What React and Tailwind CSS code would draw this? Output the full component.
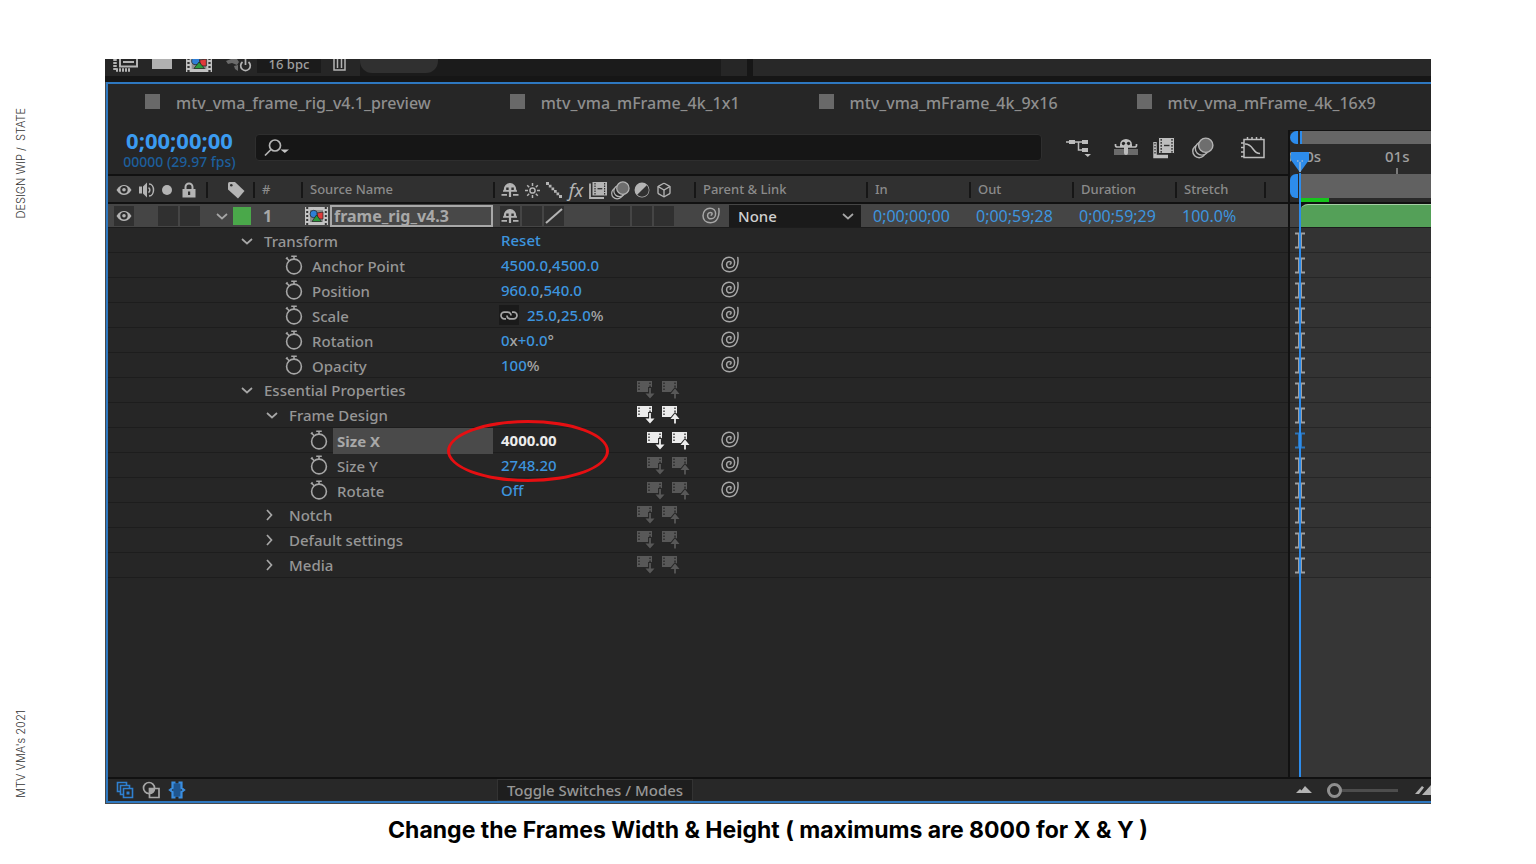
import clsx from 'clsx'
import { Box } from 'lucide-react'

const COLUMNS = 'grid grid-cols-[100px_47px_48px_minmax(0,1fr)_201px_172px_103px_103px_103px_89px_22px]'
const PROP_COLUMNS = 'grid grid-cols-[minmax(0,1fr)_201px_592px]'

const tabs = [
    'mtv_vma_frame_rig_v4.1_preview',
    'mtv_vma_mFrame_4k_1x1',
    'mtv_vma_mFrame_4k_9x16',
    'mtv_vma_mFrame_4k_16x9',
]

// strings in `value` starting with "~" are drawn as plain grey units
const rows = [
    { name: 'Transform', kind: 'group', level: 0, open: true, reset: true },
    { name: 'Anchor Point', kind: 'prop', level: 0, value: ['4500.0', '~,', '4500.0'] },
    { name: 'Position', kind: 'prop', level: 0, value: ['960.0', '~,', '540.0'] },
    { name: 'Scale', kind: 'prop', level: 0, linked: true, value: ['25.0', '~,', '25.0', '~%'] },
    { name: 'Rotation', kind: 'prop', level: 0, value: ['0', '~x', '+0.0', '~°'] },
    { name: 'Opacity', kind: 'prop', level: 0, value: ['100', '~%'] },
    { name: 'Essential Properties', kind: 'group', level: 0, open: true, sync: 'off' },
    { name: 'Frame Design', kind: 'group', level: 1, open: true, sync: 'on' },
    { name: 'Size X', kind: 'prop', level: 1, value: ['4000.00'], sync: 'on', selected: true },
    { name: 'Size Y', kind: 'prop', level: 1, value: ['2748.20'], sync: 'off' },
    { name: 'Rotate', kind: 'prop', level: 1, value: ['Off'], sync: 'off' },
    { name: 'Notch', kind: 'group', level: 1, sync: 'off' },
    { name: 'Default settings', kind: 'group', level: 1, sync: 'off' },
    { name: 'Media', kind: 'group', level: 1, sync: 'off' },
]

function Eye() {
    return (
        <svg width="16" height="14" viewBox="0 0 16 14">
            <path d="M.5 7C3 3.2 5.4 2 8 2s5 1.200 7.500 5C13 10.800 10.600 12 8 12S3 10.800.500 7z" fill="#b4b4b4" />
            <circle cx="8" cy="6.800" r="3.700" fill="#2c2c2c" />
            <circle cx="8" cy="6.800" r="1.800" fill="#b4b4b4" />
        </svg>
    )
}

function Speaker() {
    return (
        <svg width="18" height="16" viewBox="0 0 18 16" fill="none" stroke="#b4b4b4" strokeWidth="1.500">
            <path d="M1 4.500h3v7H1zM5 4.500l4-4v15l-4-4z" fill="#b4b4b4" stroke="none" />
            <path d="M10.500 5.500a3 3 0 0 1 0 5M11 2c6 0 6 12 0 12" />
        </svg>
    )
}

function Lock() {
    return (
        <svg width="14" height="16" viewBox="0 0 14 16">
            <path d="M3.500 8V5a3.500 3.500 0 0 1 7 0v3" fill="none" stroke="#b4b4b4" strokeWidth="2" />
            <path d="M.500 7h13v8.500H.500z" fill="#b4b4b4" />
            <path d="M6 9.500h2.200v3.500H6z" fill="#303030" />
        </svg>
    )
}

function Tag() {
    return (
        <svg width="18" height="18" viewBox="0 0 18 18">
            <path d="M1 2.500Q1 1 2.500 1H8l9.500 9-6.500 7.500L1 8.500z" fill="#b4b4b4" />
            <circle cx="4.300" cy="4.300" r="1.300" fill="#303030" />
        </svg>
    )
}

function Shy() {
    return (
        <svg width="18" height="16" viewBox="0 0 18 16" fill="none" stroke="#b4b4b4">
            <path d="M3.500 9V7.500a5.500 5.700 0 0 1 11 0V9" fill="#b4b4b4" strokeWidth="1.500" />
            <path d="M5.200 5.500h2.500v2.500H5.200zM10.300 5.500h2.500v2.500h-2.500z" fill="#303030" stroke="none" />
            <path d="M2 9h14M.500 12.800H6M12 12.800h5.500" strokeWidth="1.700" />
            <path d="M9 5v10" strokeWidth="2.200" />
        </svg>
    )
}

function ShyToggle() {
    return (
        <svg width="24" height="24" viewBox="0 0 24 24">
            <path d="M0 13h24v6H0z" fill="#6b6b6b" />
            <path d="M6 11V8.500a6 5.500 0 0 1 12 0V11z" fill="#bdbdbd" />
            <circle cx="9.500" cy="7.500" r="1.700" fill="#262626" />
            <circle cx="14.500" cy="7.500" r="1.700" fill="#262626" />
            <path d="M1.500 8v1.500q0 1.500 2 1.500h17q2 0 2-1.500V8" fill="none" stroke="#bdbdbd" strokeWidth="1.700" />
            <path d="M12 10v7" stroke="#bdbdbd" strokeWidth="4" strokeLinecap="round" />
        </svg>
    )
}

function Sun() {
    return (
        <svg width="15" height="15" viewBox="0 0 15 15" fill="none" stroke="#b4b4b4" strokeWidth="1.500">
            <circle cx="7.500" cy="7.500" r="2.600" />
            <path d="M7.500 0v3M7.500 12v3M0 7.500h3M12 7.500h3M2.200 2.200l2 2M10.800 10.800l2 2M2.200 12.800l2-2M10.800 4.200l2-2" />
        </svg>
    )
}

function Stairs() {
    return (
        <svg width="16" height="16" viewBox="0 0 16 16" fill="#b4b4b4">
            <path d="M0 0h3v3H0zM2.800 2.800h2.700v2.700H2.800zM5.500 5.500h2.700v2.700H5.500zM8 8h2.700v2.700H8zM10.500 10.500h2.700v2.700h-2.700zM13 13h3v3h-3z" />
        </svg>
    )
}

function FilmStack() {
    return (
        <svg width="18" height="18" viewBox="0 0 18 18">
            <path d="M1 2.500V17h14" fill="none" stroke="#b4b4b4" strokeWidth="1.800" />
            <path d="M3.500 1H18v13.500H3.500z" fill="#b4b4b4" />
            <path d="M6 2v12M15.600 2v12" stroke="#303030" strokeWidth="1.200" strokeDasharray="1.500 1" />
            <path d="M8.500 7.700h4.800" stroke="#303030" strokeWidth="1.300" />
        </svg>
    )
}

function FrameBlend() {
    return (
        <svg width="24" height="24" viewBox="0 0 24 24">
            <path d="M3 6v14.500h13" fill="none" stroke="#bdbdbd" strokeWidth="3.500" />
            <path d="M3 7v12" fill="none" stroke="#303030" strokeWidth="1.300" strokeDasharray="1.500 1.500" />
            <path d="M6.500 1.500h16v16h-16z" fill="#bdbdbd" stroke="#262626" />
            <path d="M9.200 3v14M20 3v14" stroke="#303030" strokeWidth="1.400" strokeDasharray="1.700 1.300" />
            <path d="M12 9.500h5.500" stroke="#303030" strokeWidth="1.400" />
        </svg>
    )
}

function MotionBlur({ size = 19 }) {
    return (
        <svg width={size} height={size} viewBox="0 0 20 20" stroke="#b4b4b4" strokeWidth="1.300">
            <circle cx="6.500" cy="13" r="5.800" fill="#262626" />
            <circle cx="9" cy="10.500" r="6" fill="#262626" />
            <circle cx="12.500" cy="7.500" r="6.500" fill="#6e6e6e" />
        </svg>
    )
}

function Adjustment() {
    return (
        <svg width="16" height="16" viewBox="0 0 16 16">
            <circle cx="8" cy="8" r="6.700" fill="#b4b4b4" stroke="#b4b4b4" strokeWidth="1.500" />
            <path d="M12.800 3.200A6.700 6.700 0 0 1 3.200 12.800z" fill="#303030" />
        </svg>
    )
}

function Spiral() {
    return (
        <svg width="18" height="17" viewBox="0 0 18 17" fill="none" stroke="#a6a6a6" strokeWidth="1.500" strokeLinecap="round">
            <path d="M16.800 1.500C17.800 8.500 15.500 15.700 8.500 15.700 4 15.700 1 12.800 1 8.700 1 4.300 4.300 1.200 8 1.200c3.600 0 5.600 2.500 5.600 5.300 0 3-2 5.300-4.500 5.300-2.200 0-3.500-1.500-3.500-3.400 0-2.400 2.400-3.600 4.200-2.500.500.700.300 1.800-.600 2.200" />
        </svg>
    )
}

function Stopwatch() {
    return (
        <svg width="20" height="20" viewBox="0 0 20 20" fill="none" stroke="#a6a6a6" strokeWidth="1.600">
            <circle cx="10" cy="11.500" r="7.400" />
            <path d="M7.200 1.200h5.600M10 1.200v3M2 4l1.600-1.600M2.800 3.200l2.400 2.600" />
        </svg>
    )
}

function Chevron({ open = false }) {
    return (
        <svg width="14" height="14" viewBox="0 0 14 14" fill="none" stroke="#a6a6a6" strokeWidth="1.700">
            <path d={open ? 'M2 5l5 4.500L12 5' : 'M2 2l4.500 5L2 12'} />
        </svg>
    )
}

function Link() {
    return (
        <svg width="18" height="9" viewBox="0 0 18 9" fill="none" stroke="#a6a6a6" strokeWidth="1.700">
            <path d="M6 7.800H4.300a3.300 3.300 0 0 1 0-6.600h3.200C9.500 1.200 11 2.500 11 4.500M12 1.200h1.700a3.300 3.300 0 0 1 0 6.600h-3.200C8.500 7.800 7 6.500 7 4.500" />
        </svg>
    )
}

function Sync({ up = false, on = false }) {
    const color = on ? '#ececec' : '#585858'
    return (
        <svg width="18" height="18" viewBox="0 0 18 18">
            <path d="M0 0h15v7l-4 4H0z" fill={color} />
            <path d="M2 1.500v9M13 1.500v5" stroke="#262626" strokeWidth="1.300" strokeDasharray="1.500 1.500" />
            <path
                d={up ? 'M13 7.500l4.500 5.500h-3.600v4.500h-1.800V13H8.500z' : 'M13 17.500l-4.500-5h3.600V7h1.800v5.500h3.600z'}
                fill={color}
                stroke="#262626"
                strokeWidth="2"
                paintOrder="stroke"
            />
        </svg>
    )
}

function Footage({ width = 23, height = 20 }) {
    return (
        <svg width={width} height={height} viewBox="0 0 23 20" preserveAspectRatio="none">
            <path d="M0 1h23v18H0z" fill="#c2c2c2" />
            <path d="M2.200 1v18M20.800 1v18" stroke="#333" strokeWidth="2" strokeDasharray="2 2" />
            <path d="M5 4h13v12H5z" fill="#8f8f8f" />
            <circle cx="8.700" cy="8" r="3.700" fill="#2f7fd6" stroke="#222" strokeWidth=".700" />
            <path d="M12 7l6-1v7h-5z" fill="#e03a3a" stroke="#222" strokeWidth=".700" />
            <path d="M11.500 9l5 6.500H7z" fill="#2c9a3c" stroke="#222" strokeWidth=".700" />
        </svg>
    )
}

function Flowchart() {
    return (
        <svg width="26" height="24" viewBox="0 0 26 24" fill="#bdbdbd">
            <path d="M3 4h6v4H3zM16 4h6v4h-6zM16 12h6v4h-6zM18.500 18h6.500l-3.200 3z" />
            <path d="M0 6h16M12.500 6v8H16" fill="none" stroke="#bdbdbd" strokeWidth="1.500" />
        </svg>
    )
}

function GraphEditor() {
    return (
        <svg width="24" height="24" viewBox="0 0 24 24" fill="none" stroke="#bdbdbd" strokeWidth="1.500">
            <path d="M3 3.500h20v18H3z" />
            <path d="M6.500 1v3M11 1v3M15.500 1v3M20 1v3M0 7h3M0 11.500h3M0 16h3M0 20.500h3M4 8c9 0 7 9.500 15 9.500" />
        </svg>
    )
}

function Well({ children }) {
    return <div className="flex h-5 w-5 items-center justify-center bg-[#303030]">{children}</div>
}

function HeadCell({ children, className }) {
    return (
        <div className={clsx('flex items-center', className)}>
            {children}
            <span className="ml-auto h-4 w-0.5 bg-[#161616]" />
        </div>
    )
}

function TopStrip() {
    return (
        <div className="flex h-[17px] items-start overflow-hidden bg-[#262626] pl-px text-[#a0a0a0]">
            <div className="flex w-[151px] shrink-0 pl-1.5">
                <svg width="26" height="13" viewBox="0 0 26 13" fill="none" stroke="#b4b4b4" strokeWidth="2">
                    <path d="M8 0v7.500h17V0M11 3h11" />
                    <path d="M3 0v11h16" strokeDasharray="2 1" strokeWidth="3.500" />
                </svg>
                <span className="ml-3.5 h-2.5 w-5 bg-[#b0b0b0]" />
                <span className="-mt-1.5 ml-3.5">
                    <Footage width={26} height={20} />
                </span>
                <svg className="ml-3.5 shrink-0" width="26" height="13" viewBox="0 0 26 13">
                    <path d="M0 2l5-2h6l2 3-2 3-5-2-4 1zM8 7l4-1v6l-3-2z" fill="#6b6b6b" />
                    <path d="M16.500 3a4.800 4.800 0 1 0 6 0M19.500 0v6" fill="none" stroke="#b4b4b4" strokeWidth="1.700" />
                </svg>
            </div>
            <button className="flex h-3.5 w-16 shrink-0 justify-center bg-[#1b1b1b] text-[13px] leading-[10px] font-medium">
                16 bpc
            </button>
            <svg className="ml-3 shrink-0" width="13" height="12" viewBox="0 0 13 12" fill="none" stroke="#b4b4b4" strokeWidth="1.500">
                <path d="M1 0v11h11V0M4.500 0v9M8.500 0v9" />
            </svg>
            <div className="ml-3.5 h-full w-[361px] shrink-0 bg-[#1b1b1b]">
                <div className="h-3.5 w-[78px] rounded-b-xl bg-[#303030]" />
            </div>
            <div className="ml-[26px] h-full w-1.5 shrink-0 bg-[#161616]" />
            <div className="h-full flex-1 bg-[#282828]" />
        </div>
    )
}

function Toolbar() {
    return (
        <div className="flex h-11 items-start bg-[#262626]">
            <div className="w-[147px] shrink-0 pr-3 pl-2 text-center whitespace-nowrap">
                <p className="text-[22px] leading-5 font-bold text-[#3b9bf0]">0;00;00;00</p>
                <p className="text-sm leading-6 font-medium text-[#1d5f9c]">00000 (29.97 fps)</p>
            </div>
            <label className="mt-1 flex h-[27px] flex-1 items-center rounded-sm border border-[#2e2e2e] bg-[#161616] pl-2">
                <svg width="26" height="20" viewBox="0 0 26 20" fill="none" stroke="#b4b4b4" strokeWidth="1.700">
                    <circle cx="11" cy="7.500" r="5.500" />
                    <path d="M7 11.500L1 17.500" />
                    <path d="M16.500 11.500h8.500l-4.200 3.500z" fill="#c4c4c4" stroke="none" />
                </svg>
                <input type="text" aria-label="Search layers" className="h-full flex-1 bg-transparent pl-2 text-sm text-[#b4b4b4] outline-none" />
            </label>
            <div className="flex items-center pt-1.5 pr-[23px] pl-6">
                <button aria-label="Composition mini-flowchart"><Flowchart /></button>
                <button aria-label="Hide shy layers" className="ml-[22px]"><ShyToggle /></button>
                <button aria-label="Frame blending" className="ml-3.5"><FrameBlend /></button>
                <button aria-label="Motion blur" className="ml-4"><MotionBlur size={22} /></button>
                <button aria-label="Graph editor" className="ml-[27px]"><GraphEditor /></button>
            </div>
        </div>
    )
}

function ColumnHeader() {
    return (
        <div className={clsx(COLUMNS, 'h-[30px] border-y-2 border-[#111] bg-[#303030] pt-0.5 text-[13px] font-medium text-[#8b8b8b]')}>
            <HeadCell className="pl-2">
                <Eye />
                <span className="ml-1.5"><Speaker /></span>
                <span className="ml-1.5 h-2.5 w-2.5 rounded-full bg-[#b4b4b4]" />
                <span className="ml-2.5"><Lock /></span>
            </HeadCell>
            <HeadCell className="pl-[19px]"><Tag /></HeadCell>
            <HeadCell className="pl-[7px]">#</HeadCell>
            <HeadCell className="pl-[7px]">Source Name</HeadCell>
            <HeadCell className="pl-[5px]">
                <div className="grid grid-cols-8 gap-0.5">
                    <span className="flex w-5 items-center justify-center"><Shy /></span>
                    <span className="flex w-5 items-center justify-center"><Sun /></span>
                    <span className="flex w-5 items-center justify-center"><Stairs /></span>
                    <span className="flex w-5 items-center justify-center text-lg leading-5 font-normal text-[#b4b4b4] italic">fx</span>
                    <span className="flex w-5 items-center justify-center"><FilmStack /></span>
                    <span className="flex w-5 items-center justify-center"><MotionBlur /></span>
                    <span className="flex w-5 items-center justify-center"><Adjustment /></span>
                    <span className="flex w-5 items-center justify-center"><Box size={16} color="#b4b4b4" /></span>
                </div>
            </HeadCell>
            <HeadCell className="pl-[7px]">Parent & Link</HeadCell>
            <HeadCell className="pl-[7px]">In</HeadCell>
            <HeadCell className="pl-[7px]">Out</HeadCell>
            <HeadCell className="pl-[7px]">Duration</HeadCell>
            <HeadCell className="pl-[7px]">Stretch</HeadCell>
            <div />
        </div>
    )
}

function LayerRow() {
    return (
        <div className={clsx(COLUMNS, 'h-6 items-center border-b border-[#1c1c1c] bg-[#454545] text-base leading-5 text-[#3d94de]')}>
            <div className="flex pl-1.5">
                <Well><Eye /></Well>
                <span className="ml-6"><Well /></span>
                <span className="ml-0.5"><Well /></span>
            </div>
            <div className="flex items-center gap-1 pl-[7px]">
                <button aria-label="Collapse layer"><Chevron open /></button>
                <span className="h-[18px] w-[18px] bg-[#4aa84a]" />
            </div>
            <span className="pl-2 font-bold text-[#a8a8a8]">1</span>
            <div className="flex items-center gap-0.5 pr-0.5 pl-0.5">
                <Footage />
                <input
                    type="text"
                    aria-label="Layer name"
                    defaultValue="frame_rig_v4.3"
                    className="h-[22px] min-w-0 flex-1 border-2 border-[#a8a8a8] bg-[#484848] px-0.5 leading-4 font-bold text-[#a8a8a8] outline-none"
                />
            </div>
            <div className="flex gap-0.5 pl-[5px]">
                <Well><Shy /></Well>
                <Well />
                <Well>
                    <svg width="18" height="16" viewBox="0 0 18 16"><path d="M1 15L17 1" stroke="#b4b4b4" strokeWidth="2" /></svg>
                </Well>
                <span className="w-[42px]" />
                <Well />
                <Well />
                <Well />
            </div>
            <div className="flex items-center pr-[7px] pl-1.5">
                <button aria-label="Parent pick whip"><Spiral /></button>
                <div className="relative ml-[9px] flex-1">
                    <select aria-label="Parent" className="block h-[22px] w-full appearance-none bg-[#1a1a1a] pl-[9px] text-[15px] leading-5 font-medium text-[#d0d0d0]">
                        <option>None</option>
                    </select>
                    <span className="pointer-events-none absolute top-1 right-1.5"><Chevron open /></span>
                </div>
            </div>
            <span className="pl-[5px]">0;00;00;00</span>
            <span className="pl-[5px]">0;00;59;28</span>
            <span className="pl-[5px]">0;00;59;29</span>
            <span className="pl-[5px]">100.0%</span>
            <div />
        </div>
    )
}

function PropertyName({ row }) {
    if (row.kind === 'group') {
        return (
            <div className={clsx('flex items-center gap-2.5', row.level ? 'pl-[157px]' : 'pl-[132px]')}>
                <button aria-label={`Toggle ${row.name}`}><Chevron open={row.open} /></button>
                <span>{row.name}</span>
            </div>
        )
    }
    return (
        <div className={clsx('flex gap-1', row.level ? 'pl-[201px]' : 'pl-44')}>
            <button aria-label={`Animate ${row.name}`} className="pb-0.5"><Stopwatch /></button>
            <span className={clsx('mr-0.5 flex-1 pt-px pl-1', row.selected && 'bg-[#4a4a4a] font-bold text-[#a8a8a8]')}>
                {row.name}
            </span>
        </div>
    )
}

function PropertyRow({ row }) {
    return (
        <div className={clsx(PROP_COLUMNS, 'h-[25px] border-b border-[#1d1d1d] text-[15px] leading-6 font-medium text-[#969696]')}>
            <PropertyName row={row} />
            <div className="relative flex items-center pl-1.5 text-[#3d94de]">
                <div className={clsx('flex items-center pb-0.5 whitespace-nowrap', row.level && row.kind === 'prop' ? 'w-[146px]' : 'w-[136px]')}>
                    {row.reset && <button>Reset</button>}
                    {row.linked && (
                        <button aria-label="Constrain proportions" className="mr-2 -ml-0.5 flex h-5 w-5 items-center justify-center bg-[#1a1a1a]">
                            <Link />
                        </button>
                    )}
                    {row.value && (
                        <span className={clsx(row.selected && 'font-bold text-[#ececec]')}>
                            {row.value.map((part, i) =>
                                part[0] === '~'
                                    ? <span key={i} className="text-[#a6a6a6]">{part.slice(1)}</span>
                                    : part
                            )}
                        </span>
                    )}
                </div>
                {row.sync && (
                    <div className="flex gap-[7px]">
                        <button aria-label="Pull"><Sync on={row.sync === 'on'} /></button>
                        <button aria-label="Push"><Sync up on={row.sync === 'on'} /></button>
                    </div>
                )}
                {row.selected && (
                    <div className="pointer-events-none absolute -top-2 -left-12 z-10 h-[62px] w-[162px] rounded-[50%] border-[3px] border-[#e60f12]" />
                )}
            </div>
            <div className="flex items-center pb-1 pl-[25px]">
                {row.kind === 'prop' && <button aria-label={`${row.name} pick whip`}><Spiral /></button>}
            </div>
        </div>
    )
}

function IBeam({ color }) {
    return (
        <svg width="12" height="17" viewBox="0 0 12 17" stroke={color}>
            <path d="M1 1.500h10M1 15.500h10" strokeWidth="2" />
            <path d="M6 1.500v14" strokeWidth="4" />
        </svg>
    )
}

function Timeline() {
    return (
        <div className="relative flex w-[143px] shrink-0 flex-col overflow-hidden border-t border-l-2 border-[#111] bg-[#2a2a2a]">
            <div className="flex h-[13px] gap-0.5">
                <span className="w-2 rounded-l-full bg-[#2d8ceb]" />
                <span className="flex-1 border-l-2 border-[#2d8ceb] bg-[#666]" />
            </div>
            <div className="relative h-[30px] text-[15px] leading-6 font-medium text-[#a0a0a0]">
                <span className="absolute -left-1.5 whitespace-nowrap">0:00s</span>
                <span className="absolute left-[95px] flex flex-col items-center">
                    01s
                    <span className="h-1.5 w-0.5 bg-[#7a7a7a]" />
                </span>
            </div>
            <div className="flex h-6 gap-0.5">
                <span className="w-2 rounded-l-md bg-[#2d8ceb]" />
                <span className="flex-1 bg-[#616161]" />
            </div>
            <div className="h-1 pl-2.5"><div className="h-full w-[29px] bg-[#16c51c]" /></div>
            <div className="h-0.5 bg-[#111]" />
            <div className="h-6 border-b border-[#1c1c1c] bg-[#454545] pl-2.5">
                <div className="h-full bg-[#161616]">
                    <div className="h-full rounded-tl-lg border-t border-[#a5cfa5] bg-[#54a058]" />
                </div>
            </div>
            {rows.map((row) => (
                <div key={row.name} className="flex h-[25px] items-center border-b border-[#262626] bg-[#333] pl-1">
                    <IBeam color={row.selected ? '#2d74b8' : '#a0a0a0'} />
                </div>
            ))}
            <div className="flex flex-1 pl-2.5"><div className="flex-1 bg-[#363636]" /></div>
            <svg className="absolute top-5 left-0" width="20" height="22" viewBox="0 0 20 22">
                <path d="M1 1h18v8l-9 12.500L1 9z" fill="#2d8ceb" />
                <path d="M7 10h1.500M11.500 10H13M10 11v10" stroke="#9cb8d4" strokeWidth="1.500" />
            </svg>
            <div className="absolute top-[42px] bottom-0 left-[9px] w-0.5 bg-[#2d8ceb]" />
        </div>
    )
}

function Footer() {
    return (
        <div className="flex h-6 items-center overflow-hidden border-t-2 border-[#111] bg-[#282828]">
            <div className="flex w-[389px] shrink-0 items-center gap-2 pl-2">
                <button aria-label="Layer switches pane">
                    <svg width="18" height="18" viewBox="0 0 18 18" fill="none" stroke="#2f80d0" strokeWidth="1.600">
                        <path d="M4 10.500H1.500v-9h9V4M7 13.500H4.500V4.500h9V7" />
                        <path d="M7.500 7.500h9v9h-9z" />
                        <path d="M10.500 10.500h3v3h-3z" fill="#2f80d0" stroke="none" />
                    </svg>
                </button>
                <button aria-label="Transfer controls pane">
                    <svg width="18" height="18" viewBox="0 0 18 18" fill="none" stroke="#a6a6a6" strokeWidth="1.700">
                        <circle cx="7" cy="7" r="5.500" />
                        <path d="M12.500 7.500H17V16.500H7.500v-4" />
                        <path d="M7.500 7.500h5a5.500 5.500 0 0 1-5 5z" fill="#a6a6a6" />
                    </svg>
                </button>
                <button aria-label="In/Out/Duration/Stretch panes">
                    <svg width="18" height="18" viewBox="0 0 18 18">
                        <path d="M5 2h8v14H5z" fill="#1f5690" />
                        <path d="M7.500 1.500H4.500V7L2 9l2.500 2v5.500h3M10.500 1.500h3V7L16 9l-2.500 2v5.500h-3" fill="none" stroke="#3a8ee0" strokeWidth="2.200" />
                    </svg>
                </button>
            </div>
            <button className="h-[22px] w-[196px] border border-[#333] bg-[#1e1e1e] text-[15px] leading-5 font-medium whitespace-nowrap text-[#969696]">
                Toggle Switches / Modes
            </button>
            <div className="ml-auto flex w-[135px] items-center">
                <svg width="16" height="10" viewBox="0 0 16 10"><path d="M0 8l4-4 1.500 1.500L9 1l7 7z" fill="#b4b4b4" /></svg>
                <input
                    type="range"
                    aria-label="Zoom"
                    defaultValue="0"
                    className="ml-[15px] h-4 w-[71px] appearance-none bg-transparent [&::-webkit-slider-runnable-track]:h-[3px] [&::-webkit-slider-runnable-track]:bg-[#4d4d4d] [&::-webkit-slider-thumb]:-mt-1.5 [&::-webkit-slider-thumb]:h-[15px] [&::-webkit-slider-thumb]:w-[15px] [&::-webkit-slider-thumb]:appearance-none [&::-webkit-slider-thumb]:rounded-full [&::-webkit-slider-thumb]:border-[3px] [&::-webkit-slider-thumb]:border-[#8f8f8f] [&::-webkit-slider-thumb]:bg-[#282828]"
                />
                <svg className="ml-auto" width="16" height="12" viewBox="0 0 16 12"><path d="M0 10l7-8 2 1.500L4 10zM7 11l9-10v10z" fill="#b4b4b4" /></svg>
            </div>
        </div>
    )
}

export default function App() {
    return (
        <div className="grid min-h-screen grid-cols-[105px_minmax(0,1fr)_105px] bg-white font-['Noto_Sans',sans-serif]">
            <aside className="flex flex-col justify-between pt-[108px] pb-[66px] pl-3 font-['Inter',sans-serif] text-[11px] leading-[18px] font-light text-[#333]">
                <p className="rotate-180 self-start whitespace-pre [writing-mode:vertical-rl]">DESIGN WIP /  STATE</p>
                <p className="rotate-180 self-start [writing-mode:vertical-rl]">MTV VMA's 2021</p>
            </aside>
            <main className="flex flex-col pt-[59px]">
                <section className="flex flex-1 flex-col bg-[#4a4a4a] pb-px">
                    <TopStrip />
                    <div className="h-1.5 bg-[#161616]" />
                    <div className="ml-px flex flex-1 flex-col border-2 border-r-0 border-[#2e78c0] bg-[#262626]">
                        <nav className="flex h-[46px] items-start gap-[79px] overflow-hidden pt-[7px] pl-[37px] text-base font-medium text-[#8e8e8e]">
                            {tabs.map((tab) => (
                                <button key={tab} className="flex shrink-0 items-center gap-4">
                                    <span className="mb-1 h-[15px] w-[15px] bg-[#696969]" />
                                    {tab}
                                </button>
                            ))}
                        </nav>
                        <div className="flex flex-1">
                            <div className="min-w-0 flex-1">
                                <Toolbar />
                                <ColumnHeader />
                                <LayerRow />
                                {rows.map((row) => <PropertyRow key={row.name} row={row} />)}
                            </div>
                            <Timeline />
                        </div>
                        <Footer />
                    </div>
                </section>
                <p className="h-[60px] pt-2.5 text-center font-['Inter',sans-serif] text-[23px] leading-8 font-bold whitespace-nowrap text-black">
                    Change the Frames Width & Height ( maximums are 8000 for X & Y )
                </p>
            </main>
            <div />
        </div>
    )
}
